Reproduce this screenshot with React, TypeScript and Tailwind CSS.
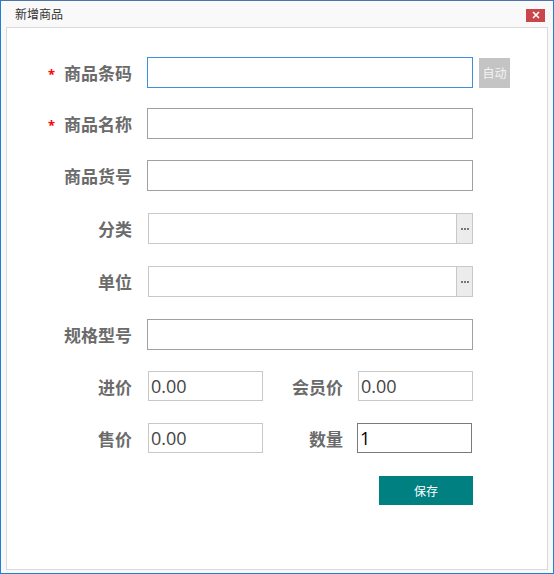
import React from "react";

const cjk = "font-['Noto_Sans_CJK_SC','Noto_Sans',sans-serif]";

function Label({ text, star }: { text: string; star?: boolean }) {
  return (
    <div className="w-[92px] flex items-center justify-end shrink-0">
      {star && <span className="text-[#ff0000] text-[13px] font-bold mr-[9px] mt-[4px] leading-none">*</span>}
      <span className={`${cjk} text-[17px] font-bold text-[#6b6b6b] leading-none`}>{text}</span>
    </div>
  );
}

function TextBox({ focused }: { focused?: boolean }) {
  return (
    <div
      className={`ml-[15px] w-[326px] h-[31px] bg-white border ${
        focused ? "border-[#3c8ee0]" : "border-[#a0a0a0]"
      }`}
    />
  );
}

function PickBox() {
  return (
    <div className="ml-[16px] w-[325px] h-[31px] flex border border-[#c8c8c8] bg-white">
      <div className="flex-1" />
      <div className="w-[16px] h-full bg-[#ececec] border-l border-[#c8c8c8] flex items-center justify-center gap-[1px]">
        <span className="w-[2px] h-[2px] bg-[#777]" />
        <span className="w-[2px] h-[2px] bg-[#777]" />
        <span className="w-[2px] h-[2px] bg-[#777]" />
      </div>
    </div>
  );
}

function NumBox({ value, dark }: { value: string; dark?: boolean }) {
  return (
    <div
      className={`w-[115px] h-[30px] bg-white border flex items-center pl-[2px] ${
        dark ? "border-[#7a7a7a]" : "border-[#c8c8c8]"
      }`}
    >
      <span className={`font-['Open_Sans',sans-serif] text-[18px] leading-none ${dark ? "text-black" : "text-[#444]"}`}>
        {value}
      </span>
    </div>
  );
}

export default function App() {
  return (
    <div className="w-[554px] h-[574px] bg-[#f9f9f9] border border-[#1e7fd6] border-t-[#4c73ab] flex flex-col overflow-hidden">
      {/* title bar */}
      <div className="h-[26px] flex items-center justify-between shrink-0">
        <span className={`${cjk} ml-[14px] text-[12px] text-[#333]`}>新增商品</span>
        <div className="mr-[8px] mt-[2px] w-[19px] h-[13px] shrink-0 bg-[#c9464a] flex items-center justify-center">
          <svg width="8" height="8" viewBox="0 0 8 8">
            <path d="M1 1 L7 7 M7 1 L1 7" stroke="white" strokeWidth="1.6" />
          </svg>
        </div>
      </div>

      {/* body */}
      <div className="ml-[5px] mr-[5px] mb-[3px] flex-1 bg-white border border-[#dadada] flex flex-col">
        <div className="mt-[29px] h-[31px] flex items-center pl-[33px]">
          <Label text="商品条码" star />
          <TextBox focused />
          <div className={`${cjk} ml-[6px] w-[31px] h-[30px] bg-[#c4c4c4] flex items-center justify-center text-[12px] text-[#f4f4f4]`}>
            自动
          </div>
        </div>
        <div className="mt-[20px] h-[31px] flex items-center pl-[33px]">
          <Label text="商品名称" star />
          <TextBox />
        </div>
        <div className="mt-[21px] h-[31px] flex items-center pl-[33px]">
          <Label text="商品货号" />
          <TextBox />
        </div>
        <div className="mt-[22px] h-[31px] flex items-center pl-[33px]">
          <Label text="分类" />
          <PickBox />
        </div>
        <div className="mt-[22px] h-[31px] flex items-center pl-[33px]">
          <Label text="单位" />
          <PickBox />
        </div>
        <div className="mt-[22px] h-[31px] flex items-center pl-[33px]">
          <Label text="规格型号" />
          <TextBox />
        </div>
        <div className="mt-[21px] h-[30px] flex items-center pl-[33px]">
          <Label text="进价" />
          <div className="ml-[16px]"><NumBox value="0.00" /></div>
          <div className="w-[80px] flex justify-end">
            <span className={`${cjk} text-[17px] font-bold text-[#6b6b6b] leading-none`}>会员价</span>
          </div>
          <div className="ml-[15px]"><NumBox value="0.00" /></div>
        </div>
        <div className="mt-[22px] h-[30px] flex items-center pl-[33px]">
          <Label text="售价" />
          <div className="ml-[16px]"><NumBox value="0.00" /></div>
          <div className="w-[80px] flex justify-end">
            <span className={`${cjk} text-[17px] font-bold text-[#6b6b6b] leading-none`}>数量</span>
          </div>
          <div className="ml-[14px]"><NumBox value="1" dark /></div>
        </div>
        <div className="mt-[23px] flex pl-[372px]">
          <button className={`${cjk} w-[94px] h-[29px] bg-[#008080] text-white text-[12px]`}>保存</button>
        </div>
      </div>
    </div>
  );
}
